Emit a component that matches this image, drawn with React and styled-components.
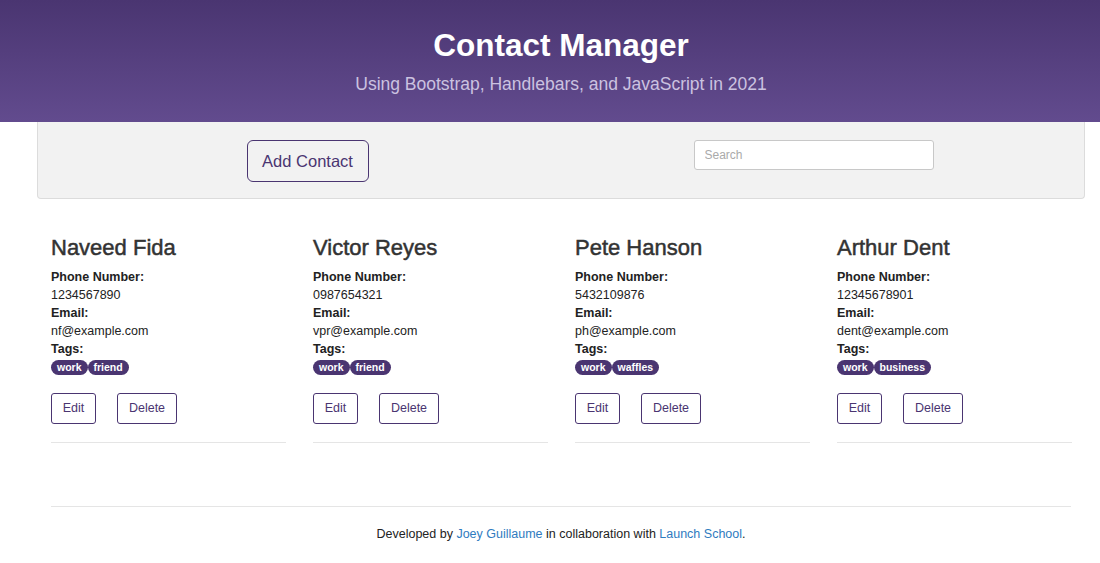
import React from 'react'
import styled, { createGlobalStyle } from 'styled-components'

const contacts = [
  { name: 'Naveed Fida', phone: '1234567890', email: 'nf@example.com', tags: ['work', 'friend'] },
  { name: 'Victor Reyes', phone: '0987654321', email: 'vpr@example.com', tags: ['work', 'friend'] },
  { name: 'Pete Hanson', phone: '5432109876', email: 'ph@example.com', tags: ['work', 'waffles'] },
  { name: 'Arthur Dent', phone: '12345678901', email: 'dent@example.com', tags: ['work', 'business'] },
]

export default function App() {
  return (
    <>
      <Global />
      <Header>
        <h1>Contact Manager</h1>
        <p>Using Bootstrap, Handlebars, and JavaScript in 2021</p>
      </Header>
      <Toolbar>
        <ToolCell>
          <AddButton>Add Contact</AddButton>
        </ToolCell>
        <ToolCell>
          <Search placeholder="Search" />
        </ToolCell>
      </Toolbar>
      <Main>
        <Cards>
          {contacts.map((c) => (
            <Card key={c.name}>
              <h3>{c.name}</h3>
              <dl>
                <dt>Phone Number:</dt>
                <dd>{c.phone}</dd>
                <dt>Email:</dt>
                <dd>{c.email}</dd>
                <dt>Tags:</dt>
                <dd>
                  <Tags>
                    {c.tags.map((t) => <Tag key={t}>{t}</Tag>)}
                  </Tags>
                </dd>
              </dl>
              <Actions>
                <SmallButton $w={45}>Edit</SmallButton>
                <SmallButton $w={60}>Delete</SmallButton>
              </Actions>
            </Card>
          ))}
        </Cards>
        <Footer>
          Developed by <a href="#">Joey Guillaume</a> in collaboration with <a href="#">Launch School</a>.
        </Footer>
      </Main>
    </>
  )
}

const Global = createGlobalStyle`
  body {
    margin: 0;
    font-family: "Liberation Sans", Arial, Helvetica, sans-serif;
    color: #222;
    background: #fff;
  }
`

const Header = styled.header`
  height: 122px;
  box-sizing: border-box;
  padding: 27px 0 0 22px;
  text-align: center;
  background: linear-gradient(to bottom, #4a3571, #624b8e);
  color: #fff;
  h1 {
    margin: 0;
    font-size: 31.5px;
    font-weight: 700;
    line-height: 36px;
  }
  p {
    margin: 11px 0 0;
    font-size: 17.5px;
    line-height: 20px;
    color: #cbc2e0;
  }
`

const Toolbar = styled.div`
  margin: 0 15px 0 37px;
  height: 77px;
  box-sizing: border-box;
  background: #f2f2f2;
  border: 1px solid #dcdcdc;
  border-top: none;
  border-radius: 0 0 4px 4px;
  display: grid;
  grid-template-columns: 1fr 1fr;
  align-items: start;
  padding-top: 18px;
`

const ToolCell = styled.div`
  display: flex;
  justify-content: center;
  &:first-child { padding-left: 16px; }
  &:last-child { padding-right: 18px; }
`

const AddButton = styled.button`
  height: 42px;
  width: 122px;
  font-family: inherit;
  font-size: 16.5px;
  color: #4a3571;
  background: transparent;
  border: 1px solid #4a3571;
  border-radius: 6px;
`

const Search = styled.input`
  width: 240px;
  height: 30px;
  box-sizing: border-box;
  border: 1px solid #c8c8c8;
  border-radius: 3px;
  padding: 0 10px;
  font-family: inherit;
  font-size: 12px;
  &::placeholder { color: #aaa; }
`

const Main = styled.main`
  width: 1020px;
  margin: 0 0 0 51px;
  padding-top: 37px;
`

const Cards = styled.div`
  display: grid;
  grid-template-columns: repeat(4, 235px);
  column-gap: 27px;
`

const Card = styled.div`
  border-bottom: 1px solid #e5e5e5;
  padding-bottom: 18px;
  h3 {
    margin: 0 0 9px;
    font-size: 22px;
    line-height: 24px;
    font-weight: 500;
    color: #333;
    -webkit-text-stroke: 0.5px #333;
  }
  dl {
    margin: 0;
    font-size: 12.5px;
    line-height: 17.5px;
  }
  dt { font-weight: 700; color: #222; }
  dd { margin: 0 0 1px; color: #222; }
`

const Tags = styled.div`
  display: flex;
  margin-top: 1px;
`

const Tag = styled.span`
  background: #4a3571;
  color: #fff;
  font-size: 10.5px;
  font-weight: 700;
  line-height: 15px;
  padding: 0 6px;
  border-radius: 8px;
`

const Actions = styled.div`
  display: flex;
  gap: 21px;
  margin-top: 18px;
`

const SmallButton = styled.button`
  width: ${(p) => p.$w}px;
  height: 31px;
  padding: 0;
  font-family: inherit;
  font-size: 12.5px;
  color: #4a3571;
  background: #fff;
  border: 1px solid #4a3571;
  border-radius: 3px;
`

const Footer = styled.footer`
  margin-top: 63px;
  border-top: 1px solid #e5e5e5;
  padding-top: 20px;
  text-align: center;
  font-size: 12.5px;
  color: #222;
  a { color: #2f7bc0; text-decoration: none; }
`
